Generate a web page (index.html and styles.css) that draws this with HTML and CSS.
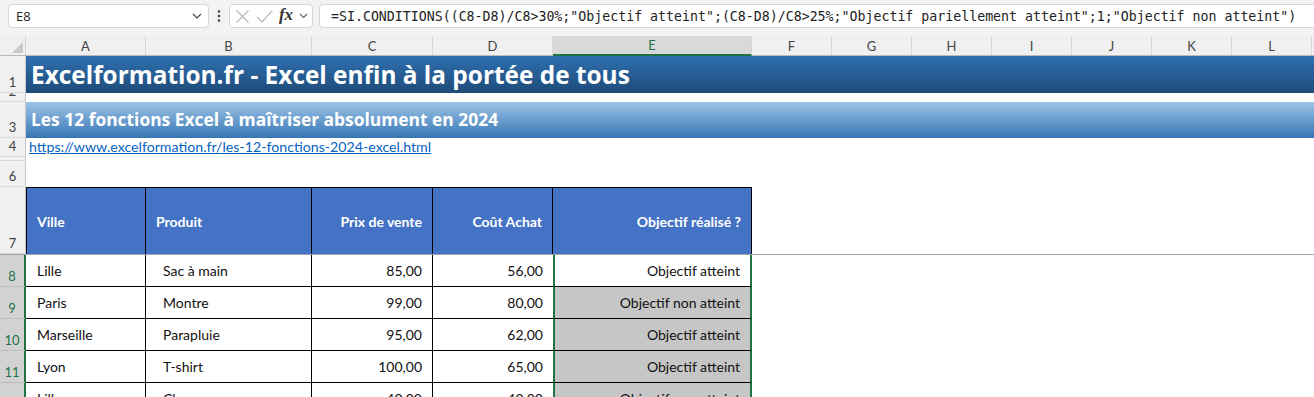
FILE: index.html
```html
<!DOCTYPE html>
<html lang="fr">
<head>
    <meta charset="UTF-8">
    <meta name="viewport" content="width=device-width, initial-scale=1.0">
    <title>Excelformation - SI.CONDITIONS</title>
    <link rel="stylesheet" href="styles.css">
</head>
<body>
<div class="toolbar">
    <div class="namebox">
        <span class="cellRef">E8</span>
        <svg class="chevron" width="10" height="6" viewBox="0 0 10 6"><path d="M1 1l4 4 4-4" fill="none" stroke="#444" stroke-width="1.2"/></svg>
    </div>
    <svg class="dots" width="4" height="12" viewBox="0 0 4 12"><circle cx="2" cy="1.5" r="1.3"/><circle cx="2" cy="6" r="1.3"/><circle cx="2" cy="10.5" r="1.3"/></svg>
    <div class="fxBox">
        <svg width="15" height="15" viewBox="0 0 15 15"><path d="M1.5 1.5l12 12M13.5 1.5l-12 12" fill="none" stroke="#b8b8b8" stroke-width="1.2"/></svg>
        <svg width="17" height="15" viewBox="0 0 17 15"><path d="M1 8l5 5L16 2" fill="none" stroke="#b8b8b8" stroke-width="1.2"/></svg>
        <span class="fx">fx</span>
        <svg class="smallChevron" width="9" height="6" viewBox="0 0 9 6"><path d="M1 1l3.5 3.5L8 1" fill="none" stroke="#666" stroke-width="1.1"/></svg>
    </div>
    <div class="formula">=SI.CONDITIONS((C8-D8)/C8&gt;30%;"Objectif atteint";(C8-D8)/C8&gt;25%;"Objectif pariellement atteint";1;"Objectif non atteint")</div>
</div>

<div class="sheet">
    <div class="row colHeads">
        <div class="corner"><svg width="11" height="11" viewBox="0 0 11 11"><path d="M11 0V11H0Z" fill="#c9c9c9"/></svg></div>
        <div class="ch">A</div>
        <div class="ch">B</div>
        <div class="ch">C</div>
        <div class="ch">D</div>
        <div class="ch chSel">E</div>
        <div class="ch">F</div>
        <div class="ch">G</div>
        <div class="ch">H</div>
        <div class="ch">I</div>
        <div class="ch">J</div>
        <div class="ch">K</div>
        <div class="ch">L</div>
        <div class="ch last"></div>
    </div>

    <div class="row r1">
        <div class="rh">1</div>
        <div class="banner mainTitle">Excelformation.fr - Excel enfin à la portée de tous</div>
    </div>
    <div class="row r2">
        <div class="rh">2</div>
    </div>
    <div class="row r3">
        <div class="rh">3</div>
        <div class="banner subTitle">Les 12 fonctions Excel à maîtriser absolument en 2024</div>
    </div>
    <div class="row r4">
        <div class="rh">4</div>
        <div class="banner linkCell"><a href="#">https://www.excelformation.fr/les-12-fonctions-2024-excel.html</a></div>
    </div>
    <div class="row r5">
        <div class="rh">5</div>
    </div>
    <div class="row r6">
        <div class="rh">6</div>
    </div>

    <div class="row r7">
        <div class="rh">7</div>
        <div class="th first">Ville</div>
        <div class="th">Produit</div>
        <div class="th right">Prix de vente</div>
        <div class="th right">Coût Achat</div>
        <div class="th right">Objectif réalisé ?</div>
    </div>

    <div class="row data">
        <div class="rh rhSel">8</div>
        <div class="td">Lille</div>
        <div class="td indent">Sac à main</div>
        <div class="td right">85,00</div>
        <div class="td right">56,00</div>
        <div class="td right sel active">Objectif atteint</div>
    </div>
    <div class="row data">
        <div class="rh rhSel">9</div>
        <div class="td">Paris</div>
        <div class="td indent">Montre</div>
        <div class="td right">99,00</div>
        <div class="td right">80,00</div>
        <div class="td right sel">Objectif non atteint</div>
    </div>
    <div class="row data">
        <div class="rh rhSel">10</div>
        <div class="td">Marseille</div>
        <div class="td indent">Parapluie</div>
        <div class="td right">95,00</div>
        <div class="td right">62,00</div>
        <div class="td right sel">Objectif atteint</div>
    </div>
    <div class="row data">
        <div class="rh rhSel">11</div>
        <div class="td">Lyon</div>
        <div class="td indent">T-shirt</div>
        <div class="td right">100,00</div>
        <div class="td right">65,00</div>
        <div class="td right sel">Objectif atteint</div>
    </div>
    <div class="row data">
        <div class="rh rhSel">12</div>
        <div class="td">Lille</div>
        <div class="td indent">Chapeau</div>
        <div class="td right">40,00</div>
        <div class="td right">40,00</div>
        <div class="td right sel">Objectif non atteint</div>
    </div>
</div>
</body>
</html>
```

FILE: styles.css
```css
body{
    margin: 0;
    background-color: #ffffff;
    font-family: Lato, "Open Sans", sans-serif;
    overflow: hidden;
}

/* barre de formule */
.toolbar{
    display: flex;
    align-items: flex-start;
    height: 36px;
    padding: 4px 0 0 8px;
    box-sizing: border-box;
    background-color: #f3f3f3;
}
.namebox, .fxBox, .formula{
    height: 24px;
    box-sizing: border-box;
    background-color: #ffffff;
    border: 1px solid #d6d6d6;
    border-radius: 4px;
    display: flex;
    align-items: center;
}
.namebox{
    width: 201px;
    padding: 0 6px 0 7px;
    justify-content: space-between;
    font-family: "Open Sans", sans-serif;
    font-size: 13px;
    color: #222;
}
.dots{
    margin: 6px 8px 0 8px;
    fill: #444;
}
.fxBox{
    width: 84px;
    padding: 0 4px 0 5px;
    justify-content: space-between;
}
.fx{
    font-family: "Liberation Serif", serif;
    font-style: italic;
    font-weight: bold;
    font-size: 17px;
    color: #333;
    margin-top: -2px;
}
.formula{
    flex: 1;
    margin-left: 6px;
    padding-left: 11px;
    border-right: none;
    border-radius: 4px 0 0 4px;
    font-family: "DejaVu Sans Mono", monospace;
    font-size: 13.25px;
    color: #222;
    white-space: nowrap;
    overflow: hidden;
}

/* feuille */
.row{
    display: grid;
    grid-template-columns: 26px 120px 166px 121px 120px 199px repeat(7, 80px) 1fr;
    box-sizing: border-box;
}
.colHeads{
    height: 20px;
    background-color: #f0f0f0;
    border-bottom: 1px solid #b9b9b9;
}
.corner{
    display: flex;
    align-items: flex-end;
    justify-content: flex-end;
    padding: 0 2px 2px 0;
    border-right: 1px solid #d0d0d0;
}
.ch{
    display: flex;
    align-items: center;
    justify-content: center;
    font-size: 13px;
    color: #444;
    border-right: 1px solid #d6d6d6;
}
.ch.last{
    border-right: none;
}
.chSel{
    background-color: #d9d9d9;
    color: #217346;
    border-bottom: 2px solid #217346;
    margin-bottom: -1px;
}

.rh{
    display: flex;
    align-items: flex-end;
    justify-content: center;
    padding-bottom: 3px;
    box-sizing: border-box;
    overflow: hidden;
    line-height: 1;
    font-size: 13px;
    color: #444;
    background-color: #f0f0f0;
    border-bottom: 1px solid #d9d9d9;
    border-right: 1px solid #c8c8c8;
}
.rhSel{
    background-color: #d2d2d2;
    color: #217346;
    border-right: 2px solid #217346;
    border-bottom-color: #bdbdbd;
}

.r1{ height: 37px; }
.r2{ height: 9px; }
.r3{ height: 36px; }
.r4{ height: 19px; }
.r5{ height: 4px; }
.r6{ height: 26px; }
.r7{ height: 68px; border-bottom: 1px solid #9fa6b2; }
.data{ height: 32px; }
.data:first-of-type{ height: 33px; }

.banner{
    grid-column: 2 / -1;
    display: flex;
    align-items: flex-end;
    line-height: 1;
    color: #ffffff;
    font-family: "Open Sans", sans-serif;
    font-weight: bold;
    white-space: nowrap;
}
.mainTitle{
    padding: 0 0 6px 5px;
    font-size: 24.4px;
    background: linear-gradient(#2f70b0, #1e4b79);
}
.subTitle{
    padding: 0 0 10px 5px;
    font-size: 17.4px;
    background: linear-gradient(#9dc4e7, #3676b4);
}
.linkCell{
    padding: 0 0 3px 3px;
    font-family: Lato, sans-serif;
    font-weight: normal;
    font-size: 14.2px;
}
.linkCell a{
    color: #0563c1;
}

/* tableau */
.th, .td{
    display: flex;
    align-items: center;
    padding: 0 10px;
    font-size: 14px;
    white-space: nowrap;
    border-right: 1px solid #000;
}
.th{
    background-color: #4472c4;
    color: #ffffff;
    font-weight: bold;
    border-top: 1px solid #000;
}
.th.first{
    border-left: 1px solid #000;
    padding-left: 10px;
}
.td{
    color: #111;
    border-bottom: 1px solid #000;
    padding-left: 11px;
}
.td.indent{
    padding-left: 17px;
}
.right{
    justify-content: flex-end;
}
.data .td:nth-child(5){
    border-right: none;
}
.td.sel{
    background-color: #c6c6c6;
    border-left: 2px solid #217346;
    border-right: 2px solid #217346;
    padding-right: 10px;
}
.td.active{
    background-color: #ffffff;
}
```
